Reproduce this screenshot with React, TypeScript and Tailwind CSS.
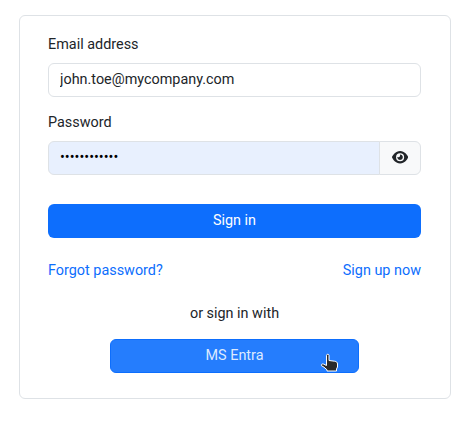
import React from "react";
import { FaEye } from "react-icons/fa6";

const HandCursor: React.FC = () => {
  return (
    <svg
      className="absolute left-[210px] top-[14px]"
      width="19"
      height="20"
      viewBox="0 0 19 20"
      fill="#2b2b2b"
      stroke="#fff"
      strokeWidth="1"
      strokeLinejoin="round"
    >
      <path d="M6.5 2.300C6.500.9 9 .9 9 2.300V7.500L14.500 8.200C16.500 8.500 17.500 9.300 17.500 11V14L16.500 16V18H7V16.800L4 14.200L1.500 12.700C1 11.400 2 10.700 3.300 11L6.500 12.500Z" />
    </svg>
  );
};

const App: React.FC = () => {
  return (
    <div className="h-[431px] bg-white px-[19px] pt-[15px] font-[Roboto,sans-serif] text-[14.4px] leading-[22px] text-[#212529]">
      <div className="h-[384px] w-[432px] rounded-[6px] border border-[#dee2e6] pl-[28px] pr-[29px] pt-[18px]">
        <label className="block" htmlFor="email">
          Email address
        </label>
        <input
          id="email"
          type="text"
          defaultValue="john.toe@mycompany.com"
          className="mt-[7px] block h-[34px] w-full rounded-[6px] border border-[#dee2e6] px-[11px] pb-[2px]"
        />
        <label className="mt-[15px] block" htmlFor="password">
          Password
        </label>
        <div className="mt-[7px] flex h-[34px]">
          <input
            id="password"
            type="password"
            defaultValue="mypassword12"
            className="min-w-0 flex-1 rounded-l-[6px] border border-[#dee2e6] bg-[#e8f0fe] px-[11px] text-black"
          />
          <button
            type="button"
            className="-ml-px flex w-[42px] items-center justify-center rounded-r-[6px] border border-[#dee2e6] bg-[#f8f9fa] pb-[2px]"
          >
            <FaEye className="h-[14.4px] w-[16.2px]" />
          </button>
        </div>
        <button
          type="button"
          className="mt-[29px] block h-[34px] w-full rounded-[6px] bg-[#0d6efd] text-white"
        >
          Sign in
        </button>
        <div className="mt-[22px] flex justify-between text-[#0d6efd]">
          <a href="#forgot">Forgot password?</a>
          <a href="#signup">Sign up now</a>
        </div>
        <p className="mt-[21px] text-center">or sign in with</p>
        <div className="relative mx-auto mt-[14px] w-[249px]">
          <button
            type="button"
            className="block h-[34px] w-full rounded-[6px] border border-[#0d6efd] bg-[#257dfd] text-[#dceaff]"
          >
            MS Entra
          </button>
          <HandCursor />
        </div>
      </div>
    </div>
  );
};

export default App;
